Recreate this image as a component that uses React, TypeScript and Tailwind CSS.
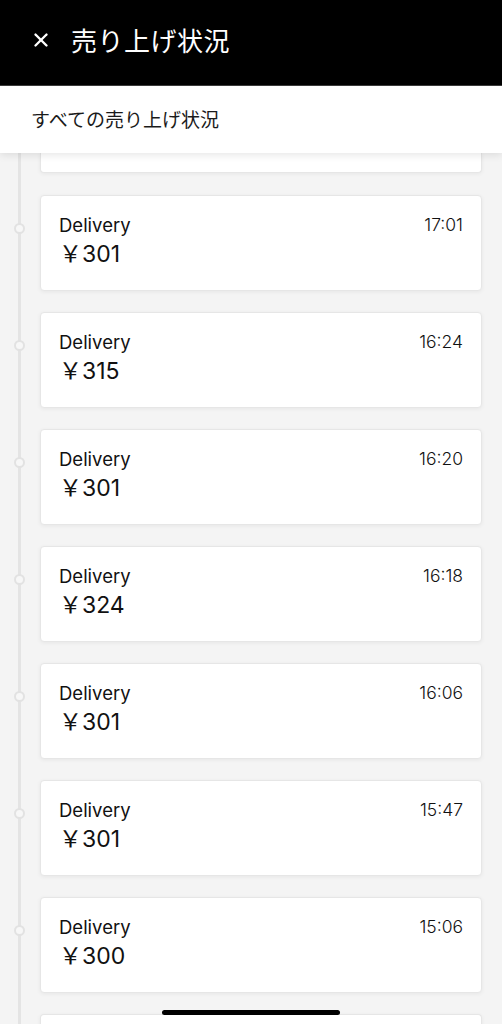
import { X } from "lucide-react"

const sales = [
  { time: "17:01", amount: 301 },
  { time: "16:24", amount: 315 },
  { time: "16:20", amount: 301 },
  { time: "16:18", amount: 324 },
  { time: "16:06", amount: 301 },
  { time: "15:47", amount: 301 },
  { time: "15:06", amount: 300 },
]

const jp = { fontFamily: '"Noto Sans CJK JP", "Noto Sans", sans-serif' }
const latin = { fontFamily: 'Inter, "Noto Sans CJK JP", sans-serif' }

export default function App() {
  return (
    <div className="relative flex h-[1024px] w-[502px] flex-col overflow-hidden bg-[#f4f4f4]">
      {/* top bar */}
      <header className="z-20 flex h-[86px] shrink-0 items-center gap-[19px] border-b border-[#3a3a3a] bg-black pb-[6px] pl-[30px] text-white">
        <X className="h-[22px] w-[22px]" strokeWidth={2.6} />
        <h1 className="text-[26px] leading-none tracking-[0.5px]" style={jp}>売り上げ状況</h1>
      </header>

      {/* filter row */}
      <div className="z-10 flex h-[67px] shrink-0 items-center bg-white pl-[31px] shadow-[0_2px_8px_rgba(0,0,0,0.10)]">
        <span className="text-[19px] text-[#1a1a1a]" style={jp}>すべての売り上げ状況</span>
      </div>

      {/* timeline list */}
      <div className="flex flex-col">
        {/* partially scrolled card */}
        <div className="flex h-[42px]">
          <div className="w-[40px] pl-[18px]"><div className="h-full w-[3px] bg-[#e4e4e4]" /></div>
          <div className="mr-[20px] h-[20px] flex-1 rounded-b-[4px] border border-t-0 border-[#e6e6e6] bg-white shadow-[0_1px_4px_rgba(0,0,0,0.06)]" />
        </div>

        {sales.map((s, i) => (
          <div key={i} className="flex h-[117px]">
            <div className="w-[40px] pl-[18px]">
              <div className="relative h-full w-[3px] bg-[#e4e4e4]">
                <span className="absolute left-[-4px] top-[28px] h-[11px] w-[11px] rounded-full border-2 border-[#e2e2e2] bg-[#f7f7f7]" />
              </div>
            </div>
            <div className="mr-[20px] flex h-[96px] flex-1 flex-col rounded-[4px] border border-[#e6e6e6] bg-white px-[18px] pt-[17px] shadow-[0_1px_4px_rgba(0,0,0,0.06)]">
              <div className="flex items-start justify-between">
                <span className="text-[18.5px] leading-[24px] text-[#111]" style={latin}>Delivery</span>
                <span className="text-[17.5px] font-light leading-[24px] text-[#111]" style={latin}>{s.time}</span>
              </div>
              <span className="mt-[3px] text-[23px] leading-[28px] text-[#111]" style={latin}>￥{s.amount}</span>
            </div>
          </div>
        ))}

        {/* next card, scrolled below the fold */}
        <div className="flex h-[40px]">
          <div className="w-[40px] pl-[18px]"><div className="h-full w-[3px] bg-[#e4e4e4]" /></div>
          <div className="mr-[20px] h-[40px] flex-1 rounded-t-[4px] border border-b-0 border-[#e6e6e6] bg-white shadow-[0_1px_4px_rgba(0,0,0,0.06)]" />
        </div>
      </div>

      {/* home indicator */}
      <div className="absolute bottom-[9px] left-[162px] h-[5px] w-[178px] rounded-full bg-black" />
    </div>
  )
}
